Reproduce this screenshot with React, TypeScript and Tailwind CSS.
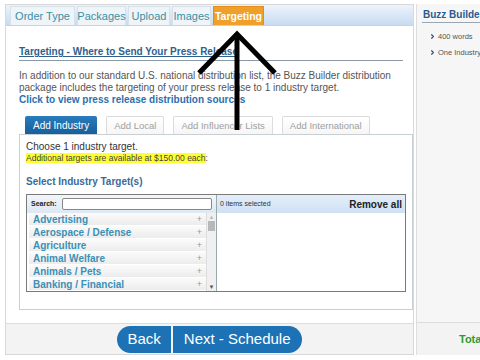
import { ChevronRight } from 'lucide-react';

const topTabs = [
  { name: 'Order Type', w: 'w-[65px]' },
  { name: 'Packages', w: 'w-[49px]' },
  { name: 'Upload', w: 'w-[42px]' },
  { name: 'Images', w: 'w-[39px]' },
];
const subTabs = ['Add Local', 'Add Influencer Lists', 'Add International'];
const industries = [
  'Advertising',
  'Aerospace / Defense',
  'Agriculture',
  'Animal Welfare',
  'Animals / Pets',
  'Banking / Financial',
];

export default function App() {
  return (
    <div className="relative w-[480px] h-[360px] overflow-hidden bg-white font-['Liberation_Sans',Arial,sans-serif]">
      <div className="flex h-[351px] mt-[4px] ml-[5px]">
        {/* Main panel */}
        <div className="w-[417px] flex flex-col border border-[#d8d8d8]">
          {/* Top tabs */}
          <div className="h-[23px] flex items-end gap-[2px] pl-[4px] bg-gradient-to-b from-[#edf3fb] to-[#c8dbf1] border-b border-[#c4d4e6]">
            {topTabs.map((t) => (
              <div
                key={t.name}
                className={`${t.w} h-[19px] flex items-center justify-center bg-[#eef4f7] border border-[#d6e2ea] border-b-0 text-[11px] text-[#3b8fa6] whitespace-nowrap`}
              >
                {t.name}
              </div>
            ))}
            <div className="w-[51px] h-[19px] flex items-center justify-center bg-[#f0a02a] border border-[#e0901a] border-b-0 text-[10.5px] font-bold text-white whitespace-nowrap">
              Targeting
            </div>
          </div>

          {/* Body */}
          <div className="flex-1 pl-[13px] pt-[18px]">
            <div className="mr-[10px] border-b border-[#8a98a8] pb-[1px] text-[10px] font-bold text-[#2f5f8c] underline">
              Targeting - Where to Send Your Press Release
            </div>
            <div className="mt-[9px] text-[10px] leading-[12px] text-[#555]">
              <p>In addition to our standard U.S. national distribution list, the Buzz Builder distribution</p>
              <p>package includes the targeting of your press release to 1 industry target.</p>
              <p className="font-bold text-[#2d6fae]">Click to view press release distribution sources</p>
            </div>

            {/* Sub tabs */}
            <div className="mt-[10px] flex items-end gap-[9px] pl-[6px]">
              <div className="h-[18px] px-[8px] flex items-center rounded-t-[2px] bg-gradient-to-b from-[#2a7cbc] to-[#155f9c] text-[10px] text-white">
                Add Industry
              </div>
              {subTabs.map((t) => (
                <div
                  key={t}
                  className="h-[18px] px-[7px] flex items-center rounded-t-[2px] border border-[#dcdcdc] border-b-0 bg-gradient-to-b from-white to-[#f6f6f6] text-[9.5px] text-[#a0a0a0]"
                >
                  {t}
                </div>
              ))}
            </div>

            {/* Content box */}
            <div className="h-[176px] border border-[#c8d0d4] px-[6px] pt-[6px]">
              <p className="text-[10px] leading-[12px] text-[#333]">Choose 1 industry target.</p>
              <p className="text-[8.5px] leading-[11px] text-[#444]">
                <span className="bg-[#ffff30]">Additional targets are available at $150.00 each</span>:
              </p>
              <p className="mt-[10px] text-[10px] font-bold text-[#3a6a98]">Select Industry Target(s)</p>

              {/* Multiselect */}
              <div className="mt-[5px] w-[380px] h-[98px] flex border border-[#7a7a7a]">
                <div className="w-[190px] flex flex-col border-r border-[#9aa]">
                  <div className="h-[18px] flex items-center gap-[5px] px-[4px] bg-gradient-to-b from-[#f2f6fa] to-[#dde8f3]">
                    <span className="text-[7px] font-bold text-[#222]">Search:</span>
                    <div className="flex-1 h-[12px] rounded-[2px] border border-[#888] bg-white" />
                  </div>
                  <div className="flex flex-1 pl-[2px]">
                    <div className="flex-1">
                      {industries.map((name) => (
                        <div
                          key={name}
                          className="h-[13px] flex items-center justify-between pl-[4px] pr-[4px] bg-gradient-to-b from-[#fbfbfb] to-[#ececec] border-b border-white"
                        >
                          <span className="text-[10px] font-bold text-[#3c90b6]">{name}</span>
                          <span className="text-[9px] text-[#999]">+</span>
                        </div>
                      ))}
                    </div>
                    <div className="w-[10px] flex flex-col items-center bg-[#f0f0f0] border-l border-[#ddd]">
                      <span className="text-[6px] leading-[8px] text-[#bbb]">▲</span>
                      <div className="w-[7px] h-[10px] bg-[#b8b8b8]" />
                      <div className="flex-1" />
                      <span className="text-[6px] leading-[8px] text-[#555]">▼</span>
                    </div>
                  </div>
                </div>
                <div className="flex-1 flex flex-col">
                  <div className="h-[18px] flex items-center justify-between px-[3px] bg-gradient-to-b from-[#e4eefa] to-[#cfe1f4]">
                    <span className="text-[7px] text-[#333]">0 items selected</span>
                    <span className="text-[10px] font-bold text-[#222]">Remove all</span>
                  </div>
                  <div className="flex-1 bg-white" />
                </div>
              </div>
            </div>
          </div>

          {/* Footer */}
          <div className="h-[33px] mt-[13px] flex items-center justify-center gap-[2px] border-t border-[#dcdcdc] bg-[#f3f3f3]">
            <button className="h-[27px] px-[10px] rounded-l-full bg-[#1d72b6] text-[15px] text-white font-['Liberation_Sans',Arial,sans-serif]">
              Back
            </button>
            <button className="h-[27px] px-[11px] rounded-r-full bg-[#1d72b6] text-[15px] text-white font-['Liberation_Sans',Arial,sans-serif]">
              Next - Schedule
            </button>
          </div>
        </div>

        {/* Right sidebar */}
        <div className="ml-[2px] flex-1 flex flex-col border-l border-[#dedede] bg-[#f6f6f6]">
          <div className="h-[16px] ml-[5px] mt-[3px] pl-[1px] border-b border-[#9aa6b2] text-[10px] font-bold text-[#2a5a90] whitespace-nowrap overflow-hidden">
            Buzz Builder
          </div>
          <div className="mt-[8px] pl-[12px] flex flex-col gap-[5px]">
            {['400 words', 'One Industry'].map((t) => (
              <div key={t} className="flex items-center gap-[2px] whitespace-nowrap">
                <ChevronRight size={7} strokeWidth={4} className="text-[#2a4a7a]" />
                <span className="text-[7.5px] text-[#555]">{t}</span>
              </div>
            ))}
          </div>
          <div className="flex-1" />
          <div className="h-[33px] flex items-center pl-[42px] border-t border-[#dcdcdc] bg-[#f3f3f3] whitespace-nowrap">
            <span className="text-[11px] font-bold text-[#2e9a2e]">Total</span>
          </div>
        </div>
      </div>

      {/* Annotation arrow */}
      <svg className="absolute left-0 top-0" width="480" height="360" viewBox="0 0 480 360">
        <polyline points="199,73 237,34 275,73" fill="none" stroke="#000" strokeWidth="5" />
        <line x1="237" y1="36" x2="237" y2="130" stroke="#000" strokeWidth="5" />
      </svg>
    </div>
  );
}
